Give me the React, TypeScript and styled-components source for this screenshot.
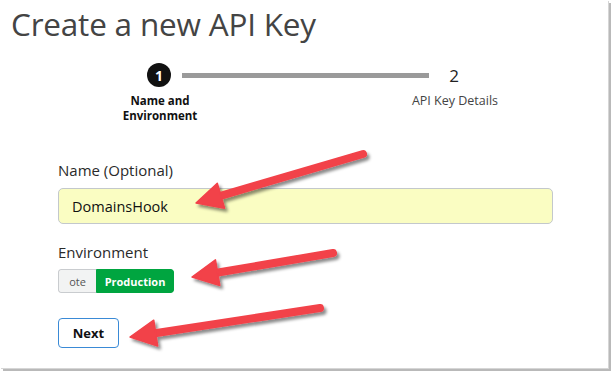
import React from "react";
import styled, { createGlobalStyle } from "styled-components";

const Global = createGlobalStyle`
  html, body { margin: 0; padding: 0; background: #ffffff; }
  body { font-family: "Open Sans", "Noto Sans", Arial, sans-serif; }
  * { box-sizing: border-box; }
`;

const Page = styled.div`
  position: relative;
  width: 614px;
  height: 374px;
  overflow: hidden;
  background: #ffffff;
`;

const Frame = styled.div`
  width: 608px;
  height: 368px;
  background: #ffffff;
  box-shadow: 1px 1px 0 #d6d6d6, 3px 3px 0 #b9b9b9;
  display: flex;
  flex-direction: column;
`;

const Title = styled.h1`
  margin: 0;
  padding: 5px 0 0 11px;
  font-family: "Open Sans", sans-serif;
  font-weight: 400;
  font-size: 31.5px;
  line-height: 38px;
  letter-spacing: -0.2px;
  color: #444444;
`;

const Stepper = styled.div`
  display: flex;
  flex-direction: column;
  margin-top: 20px;
`;

const TrackRow = styled.div`
  display: flex;
  align-items: center;
  padding-left: 147px;
  height: 24px;
`;

const Circle = styled.div`
  width: 24px;
  height: 24px;
  border-radius: 50%;
  background: #111111;
  color: #ffffff;
  font-family: "Open Sans", sans-serif;
  font-weight: 700;
  font-size: 14px;
  display: flex;
  align-items: center;
  justify-content: center;
`;

const Bar = styled.div`
  width: 247px;
  height: 5px;
  background: #9a9a9a;
  margin: 0 19px 0 11px;
`;

const StepNumber = styled.div`
  font-family: "Open Sans", sans-serif;
  font-size: 17px;
  color: #222222;
  width: 12px;
  text-align: center;
`;

const LabelRow = styled.div`
  display: flex;
  margin-top: 6px;
`;

const StepLabel = styled.div<{ $left: number; $width: number; $active?: boolean }>`
  margin-left: ${(p) => p.$left}px;
  width: ${(p) => p.$width}px;
  text-align: center;
  font-family: "Open Sans", sans-serif;
  font-size: ${(p) => (p.$active ? 11.5 : 12.5)}px;
  line-height: 15px;
  font-weight: ${(p) => (p.$active ? 700 : 400)};
  color: ${(p) => (p.$active ? "#111111" : "#444444")};
`;

const Form = styled.div`
  display: flex;
  flex-direction: column;
  padding-left: 58px;
  margin-top: 38px;
`;

const FieldLabel = styled.div<{ $mt?: number }>`
  font-family: "Open Sans", sans-serif;
  font-size: 15px;
  line-height: 18px;
  color: #2a2a2a;
  margin-top: ${(p) => p.$mt ?? 0}px;
`;

const Input = styled.div`
  margin-top: 9px;
  width: 495px;
  height: 36px;
  border: 1px solid #c3c8cc;
  border-radius: 5px;
  background: #fafdc2;
  display: flex;
  align-items: center;
  padding-left: 13px;
  font-family: "Open Sans", sans-serif;
  font-size: 14.5px;
  color: #111111;
`;

const Toggle = styled.div`
  margin-top: 8px;
  display: flex;
  height: 24px;
  width: 116px;
  border-radius: 3px;
  overflow: hidden;
`;

const ToggleOption = styled.div<{ $on?: boolean; $w: number }>`
  width: ${(p) => p.$w}px;
  display: flex;
  align-items: center;
  justify-content: center;
  font-family: "Open Sans", sans-serif;
  font-size: 11px;
  font-weight: ${(p) => (p.$on ? 700 : 400)};
  color: ${(p) => (p.$on ? "#ffffff" : "#555555")};
  background: ${(p) => (p.$on ? "#00a540" : "#f2f3f3")};
  border: 1px solid ${(p) => (p.$on ? "#00a540" : "#c9cccf")};
  border-right: ${(p) => (p.$on ? "1px solid #00a540" : "none")};
  border-radius: ${(p) => (p.$on ? "0 3px 3px 0" : "3px 0 0 3px")};
`;

const NextButton = styled.button`
  margin-top: 25px;
  width: 61px;
  height: 30px;
  border: 1px solid #3a8ad6;
  border-radius: 4px;
  background: #ffffff;
  font-family: "Open Sans", sans-serif;
  font-weight: 700;
  font-size: 13px;
  color: #111111;
  padding: 0;
`;

const Overlay = styled.svg`
  position: absolute;
  left: 0;
  top: 0;
  pointer-events: none;
`;

type Pt = [number, number];

function Arrow({ tail, tip }: { tail: Pt; tip: Pt }) {
  const dx = tip[0] - tail[0];
  const dy = tip[1] - tail[1];
  const len = Math.hypot(dx, dy);
  const ux = dx / len;
  const uy = dy / len;
  const nx = -uy;
  const ny = ux;
  const headLen = 26;
  const half = 13;
  const neck: Pt = [tip[0] - ux * headLen, tip[1] - uy * headLen];
  const shaftEnd: Pt = [tip[0] - ux * (headLen - 4), tip[1] - uy * (headLen - 4)];
  const w1: Pt = [neck[0] + nx * half, neck[1] + ny * half];
  const w2: Pt = [neck[0] - nx * half, neck[1] - ny * half];
  return (
    <g filter="url(#arrowShadow)">
      <line
        x1={tail[0]}
        y1={tail[1]}
        x2={shaftEnd[0]}
        y2={shaftEnd[1]}
        stroke="#f2424a"
        strokeWidth={8}
        strokeLinecap="round"
      />
      <polygon
        points={`${tip[0]},${tip[1]} ${w1[0]},${w1[1]} ${w2[0]},${w2[1]}`}
        fill="#f2424a"
        stroke="#f2424a"
        strokeWidth={1.5}
        strokeLinejoin="round"
      />
    </g>
  );
}

export default function App() {
  return (
    <Page>
      <Global />
      <Frame>
        <Title>Create a new API Key</Title>
        <Stepper>
          <TrackRow>
            <Circle>1</Circle>
            <Bar />
            <StepNumber>2</StepNumber>
          </TrackRow>
          <LabelRow>
            <StepLabel $left={112} $width={96} $active>
              Name and
              <br />
              Environment
            </StepLabel>
            <StepLabel $left={189} $width={116}>
              API Key Details
            </StepLabel>
          </LabelRow>
        </Stepper>
        <Form>
          <FieldLabel>Name (Optional)</FieldLabel>
          <Input>DomainsHook</Input>
          <FieldLabel $mt={19}>Environment</FieldLabel>
          <Toggle>
            <ToggleOption $w={38}>ote</ToggleOption>
            <ToggleOption $w={78} $on>
              Production
            </ToggleOption>
          </Toggle>
          <NextButton>Next</NextButton>
        </Form>
      </Frame>
      <Overlay width={614} height={374} viewBox="0 0 614 374">
        <defs>
          <filter id="arrowShadow" x="-20%" y="-50%" width="140%" height="200%">
            <feDropShadow dx="2.5" dy="3" stdDeviation="1.8" floodColor="#000" floodOpacity="0.45" />
          </filter>
        </defs>
        <Arrow tail={[363, 154]} tip={[196, 203]} />
        <Arrow tail={[333, 253]} tip={[192, 277]} />
        <Arrow tail={[320, 308]} tip={[130, 337]} />
      </Overlay>
    </Page>
  );
}
